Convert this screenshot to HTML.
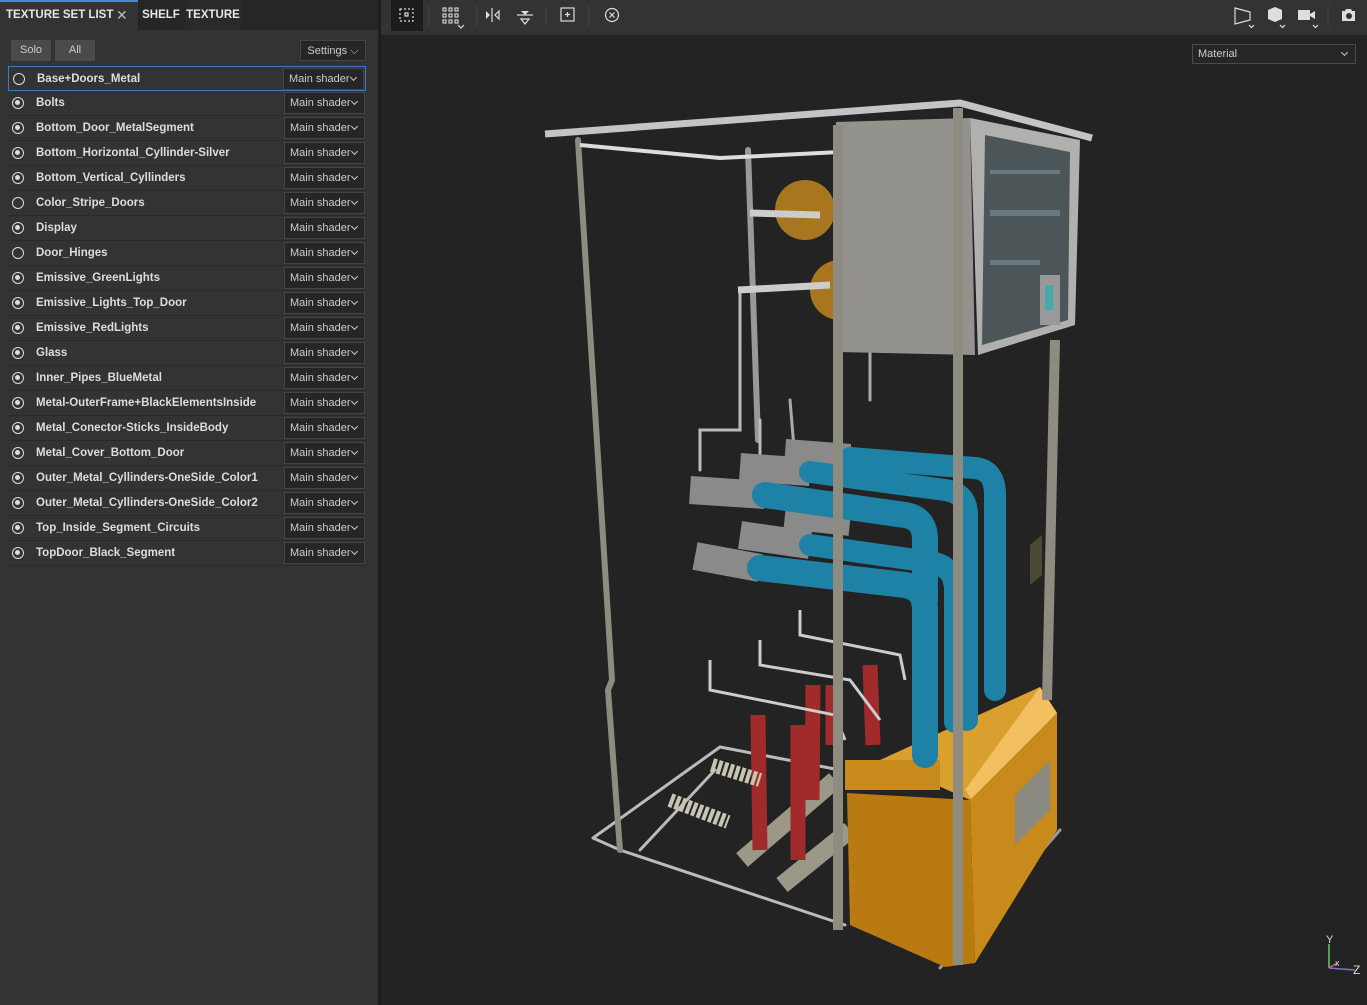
<!DOCTYPE html>
<html><head><meta charset="utf-8"><style>
*{margin:0;padding:0;box-sizing:border-box}
body{width:1367px;height:1005px;overflow:hidden;background:#222;font-family:"Liberation Sans",sans-serif;position:relative}
#left{position:absolute;left:0;top:0;width:378px;height:1005px;background:#333}
#sep{position:absolute;left:378px;top:0;width:3px;height:1005px;background:#1e1e1e}
#tabs{position:absolute;left:0;top:0;width:378px;height:30px;background:#262626}
.tab{position:absolute;top:0;height:30px;line-height:30px;font-size:11.5px;font-weight:bold;color:#e6e6e6}
#t1{left:0;width:138px;background:#333;padding-left:6px;border-top:2px solid #3d8ee0;line-height:27px}
#t1 span{position:absolute;left:116px;top:0;font-weight:normal;color:#bbb;font-size:14px}
.btn{position:absolute;top:40px;height:21px;line-height:21px;font-size:11px;color:#ccc;background:#4a4a4a;text-align:center}
.row{position:absolute;left:8px;width:358px;height:25px;border-bottom:1px solid #2a2a2a}
.row .r{position:absolute;left:4px;top:6px;width:12px;height:12px;border:1.5px solid #ddd;border-radius:50%}
.row .r.f:after{content:"";position:absolute;left:2px;top:2px;width:5px;height:5px;border-radius:50%;background:#ddd}
.row .n{position:absolute;left:28px;top:0;line-height:24px;font-size:11.5px;font-weight:bold;color:#ddd}
.dd{position:absolute;right:1px;top:1px;width:81px;height:22px;background:#262626;border:1px solid #444;font-size:11px;color:#ccc;line-height:20px;padding-left:5px}
.dd:after{content:"";position:absolute;right:7px;top:6px;width:4px;height:4px;border-right:1px solid #ccc;border-bottom:1px solid #ccc;transform:rotate(45deg)}
#top{position:absolute;left:381px;top:0;width:986px;height:35px;background:#333}
#vp{position:absolute;left:381px;top:35px;width:986px;height:970px;background:#232323}
#mat{position:absolute;left:1192px;top:44px;width:164px;height:20px;border:1px solid #4a4a4a;background:#262626;color:#ccc;font-size:11px;line-height:18px;padding-left:5px}
#mat:after{content:"";position:absolute;right:8px;top:5px;width:4px;height:4px;border-right:1px solid #ccc;border-bottom:1px solid #ccc;transform:rotate(45deg)}
</style></head><body>
<div id="left">
<div id="tabs">
<div class="tab" id="t1">TEXTURE SET LIST<span>✕</span></div>
<div class="tab" style="left:139px;width:44px;text-align:center">SHELF</div>
<div class="tab" style="left:185px;width:56px;text-align:center;background:#2a2a2a">TEXTURE</div>
</div>
<div class="btn" style="left:11px;width:40px">Solo</div>
<div class="btn" style="left:55px;width:40px">All</div>
<div class="btn" style="left:300px;width:66px;background:#262626;border:1px solid #444">Settings ⌵</div>
<div class="row" style="top:66px;border:1px solid #3d7cc0"><div class="r"></div><div class="n">Base+Doors_Metal</div><div class="dd">Main shader</div></div>
<div class="row" style="top:91px"><div class="r f"></div><div class="n">Bolts</div><div class="dd">Main shader</div></div>
<div class="row" style="top:116px"><div class="r f"></div><div class="n">Bottom_Door_MetalSegment</div><div class="dd">Main shader</div></div>
<div class="row" style="top:141px"><div class="r f"></div><div class="n">Bottom_Horizontal_Cyllinder-Silver</div><div class="dd">Main shader</div></div>
<div class="row" style="top:166px"><div class="r f"></div><div class="n">Bottom_Vertical_Cyllinders</div><div class="dd">Main shader</div></div>
<div class="row" style="top:191px"><div class="r"></div><div class="n">Color_Stripe_Doors</div><div class="dd">Main shader</div></div>
<div class="row" style="top:216px"><div class="r f"></div><div class="n">Display</div><div class="dd">Main shader</div></div>
<div class="row" style="top:241px"><div class="r"></div><div class="n">Door_Hinges</div><div class="dd">Main shader</div></div>
<div class="row" style="top:266px"><div class="r f"></div><div class="n">Emissive_GreenLights</div><div class="dd">Main shader</div></div>
<div class="row" style="top:291px"><div class="r f"></div><div class="n">Emissive_Lights_Top_Door</div><div class="dd">Main shader</div></div>
<div class="row" style="top:316px"><div class="r f"></div><div class="n">Emissive_RedLights</div><div class="dd">Main shader</div></div>
<div class="row" style="top:341px"><div class="r f"></div><div class="n">Glass</div><div class="dd">Main shader</div></div>
<div class="row" style="top:366px"><div class="r f"></div><div class="n">Inner_Pipes_BlueMetal</div><div class="dd">Main shader</div></div>
<div class="row" style="top:391px"><div class="r f"></div><div class="n">Metal-OuterFrame+BlackElementsInside</div><div class="dd">Main shader</div></div>
<div class="row" style="top:416px"><div class="r f"></div><div class="n">Metal_Conector-Sticks_InsideBody</div><div class="dd">Main shader</div></div>
<div class="row" style="top:441px"><div class="r f"></div><div class="n">Metal_Cover_Bottom_Door</div><div class="dd">Main shader</div></div>
<div class="row" style="top:466px"><div class="r f"></div><div class="n">Outer_Metal_Cyllinders-OneSide_Color1</div><div class="dd">Main shader</div></div>
<div class="row" style="top:491px"><div class="r f"></div><div class="n">Outer_Metal_Cyllinders-OneSide_Color2</div><div class="dd">Main shader</div></div>
<div class="row" style="top:516px"><div class="r f"></div><div class="n">Top_Inside_Segment_Circuits</div><div class="dd">Main shader</div></div>
<div class="row" style="top:541px"><div class="r f"></div><div class="n">TopDoor_Black_Segment</div><div class="dd">Main shader</div></div>
</div>
<div id="sep"></div>
<div id="top"></div>
<div id="vp"></div>
<svg style="position:absolute;left:0;top:0" width="1367" height="1005">
<rect x="391" y="0" width="32" height="31" fill="#1c1c1c"/>
<g stroke="#ddd" fill="none" stroke-width="1.2">
<rect x="400" y="9" width="13" height="12" stroke-dasharray="2 2"/>
<rect x="405" y="13" width="3" height="3"/>
<g stroke-width="1.1"><rect x="443" y="8" width="3" height="3"/><rect x="449" y="8" width="3" height="3"/><rect x="455" y="8" width="3" height="3"/><rect x="443" y="14" width="3" height="3"/><rect x="449" y="14" width="3" height="3"/><rect x="455" y="14" width="3" height="3"/><rect x="443" y="20" width="3" height="3"/><rect x="449" y="20" width="3" height="3"/><rect x="455" y="20" width="3" height="3"/></g>
<path d="M458 25l3 3 3-3"/>
<path d="M492 8v14"/><path d="M499 11l-4 4 4 4z"/>
<path d="M517 15h16"/><path d="M521 19l4 5 4-5z"/>
<rect x="561" y="8" width="13" height="13"/><path d="M567.5 12v5M565 14.5h5"/>
<circle cx="612" cy="15" r="6.5"/><path d="M609.5 12.5l5 5M614.5 12.5l-5 5"/>
<path d="M1235 8l15 4v8l-15 4z"/><path d="M1249 25l2.5 2.5 2.5-2.5M1280 25l2.5 2.5 2.5-2.5M1313 25l2.5 2.5 2.5-2.5"/>
</g>
<g stroke="#444"><path d="M429 6v20M477 6v20M546 6v20M589 6v20M1328 6v20"/></g>
<g fill="#ddd"><path d="M486 11l4 4-4 4z"/><path d="M521 11l4 4 4-4z"/><path d="M1268 10l7-3 7 3v9l-7 3-7-3z"/><rect x="1298" y="10" width="12" height="10"/><path d="M1310 14l5-3v8l-5-3z"/><path d="M1342 11h3l1-2h5l1 2h3v10h-13z"/></g>
<circle cx="1349" cy="16" r="3" fill="#333"/>
<g fill="none" stroke-linecap="round">
<path d="M748 150L758 440" stroke="#999" stroke-width="6"/>
<path d="M790 400L795 460M870 350L870 400" stroke="#aaa" stroke-width="3"/>
<path d="M740 290L740 430 700 430 700 470" stroke="#bbb" stroke-width="3"/>
<path d="M760 420L760 470" stroke="#bbb" stroke-width="3"/>
<path d="M593 838L720 747 840 770M593 838L620 850 845 925M715 770L640 850" stroke="#bbb" stroke-width="3"/>
<path d="M940 968L1060 830" stroke="#999" stroke-width="3"/>
<path d="M578 140L612 680 608 690 620 850" stroke="#8e8b80" stroke-width="6"/>
</g>
<circle cx="805" cy="210" r="30" fill="#a8761f"/>
<circle cx="840" cy="290" r="30" fill="#a8761f"/>
<path d="M750 213L820 215M738 290L830 285" stroke="#ccc" stroke-width="7"/>
<g stroke-linecap="butt">
<path d="M742 860L835 780M782 885L850 830" stroke="#9c9888" stroke-width="18"/>
<path d="M758 715L760 850M798 725L798 860M813 685L812 800M870 665L873 745M833 685L833 745" stroke="#a12a2a" stroke-width="15"/>
<path d="M670 800L728 822M712 765L760 780" stroke="#c8c4b4" stroke-width="14" stroke-dasharray="4 2"/>
<path d="M710 660L710 690 835 715 845 740M760 640L760 665 850 680 880 720M800 610L800 635 900 655 905 680" stroke="#ccc" stroke-width="3" fill="none"/>
</g>
<path d="M880 760L1040 687 1057 713 970 800z" fill="#d9a030"/>
<path d="M1040 687L1057 713 972 800 965 790z" fill="#f2c060"/>
<path d="M970 800L1057 713 1057 830 975 963z" fill="#c88a1a"/>
<path d="M847 793L970 800 975 963 945 967 850 925z" fill="#b97a12"/>
<path d="M845 760L940 760 940 790 845 790z" fill="#c88a1a"/>
<path d="M1015 795L1050 760 1050 810 1015 845z" fill="#8a8a80"/>
<g stroke-linecap="butt">
<path d="M690 490L765 495M740 467L810 472M785 453L850 458M695 556L760 568M740 535L810 545M785 515L850 522" stroke="#8a8a8a" stroke-width="28"/>
<g stroke="#1e82a6" fill="none" stroke-linecap="round">
<path d="M810 545L930 562Q955 566 955 590L955 722" stroke-width="22"/>
<path d="M760 568L905 585Q925 588 925 610L925 755" stroke-width="26"/>
<path d="M850 458L975 468Q995 470 995 495L995 690" stroke-width="22"/>
<path d="M810 472L945 490Q967 493 967 515L967 720" stroke-width="22"/>
<path d="M765 495L905 515Q925 518 925 540L925 600" stroke-width="26"/>
</g>
</g>
<path d="M836 122L970 118 975 355 838 352z" fill="#94928d"/>
<path d="M970 118L1080 140 1075 325 978 355z" fill="#b0b0ae"/>
<path d="M985 135L1070 152 1068 320 982 345z" fill="#4c5558"/>
<g fill="#6a7880"><rect x="990" y="170" width="70" height="4"/><rect x="990" y="210" width="70" height="6"/><rect x="990" y="260" width="50" height="5"/></g>
<path d="M1040 275h20v50h-20z" fill="#999"/><path d="M1045 285h8v25h-8z" fill="#4aa"/>
<path d="M545 134L960 103 1092 138" stroke="#c4c4c4" stroke-width="7" fill="none"/>
<path d="M580 145L720 158 840 152" stroke="#ddd" stroke-width="4" fill="none"/>
<path d="M838 125L838 930M958 108L958 965M1055 340L1047 700" stroke="#8e8b80" stroke-width="10" fill="none"/>
<path d="M1030 545l12-10v40l-12 10z" fill="#4a4a30"/>
<path d="M1329 968V944" stroke="#6c6" stroke-width="1.5"/><path d="M1329 968L1355 970" stroke="#77c" stroke-width="1.5"/><path d="M1329 968L1337 963" stroke="#c66" stroke-width="1.5"/>
<text x="1326" y="943" fill="#ddd" font-size="11" font-family="Liberation Sans">Y</text>
<text x="1335" y="966" fill="#ddd" font-size="9" font-family="Liberation Sans">x</text>
<text x="1353" y="974" fill="#ddd" font-size="12" font-family="Liberation Sans">Z</text>
</svg>
<div id="mat">Material</div>
</body></html>
